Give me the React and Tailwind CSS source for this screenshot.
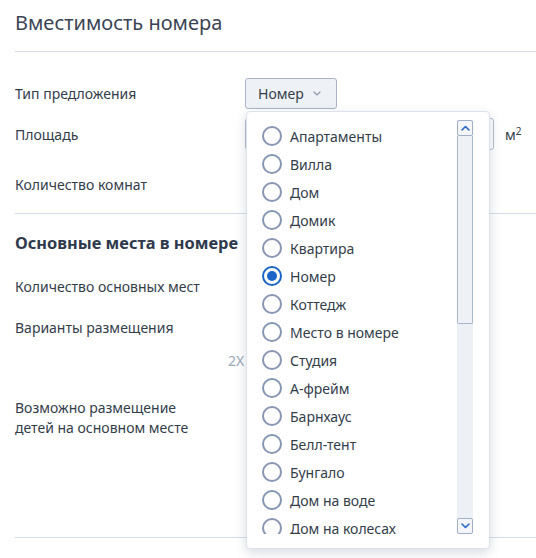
import React from "react";

const types = [
  "Апартаменты",
  "Вилла",
  "Дом",
  "Домик",
  "Квартира",
  "Номер",
  "Коттедж",
  "Место в номере",
  "Студия",
  "А-фрейм",
  "Барнхаус",
  "Белл-тент",
  "Бунгало",
  "Дом на воде",
  "Дом на колесах",
];

function Radio({ checked }) {
  return checked ? (
    <span className="w-[20px] h-[20px] rounded-full border-2 border-[#1b64c8] flex items-center justify-center shrink-0">
      <span className="w-[10px] h-[10px] rounded-full bg-[#1b64c8]" />
    </span>
  ) : (
    <span className="w-[20px] h-[20px] rounded-full border-2 border-[#8797b3] shrink-0" />
  );
}

function ScrollArrow({ up }) {
  return (
    <div className="w-[16px] h-[16px] border border-[#9fb0c8] rounded-[2px] bg-[#f3f5f9] flex items-center justify-center">
      <svg width="9" height="6" viewBox="0 0 9 6" fill="none">
        <path
          d={up ? "M1 5 L4.5 1.5 L8 5" : "M1 1 L4.5 4.5 L8 1"}
          stroke="#2a69cc"
          strokeWidth="1.6"
          strokeLinecap="round"
          strokeLinejoin="round"
        />
      </svg>
    </div>
  );
}

function TypeDropdown({ value }) {
  return (
    <div className="absolute left-[246px] top-[111px] w-[244px] bg-white border border-[#dde3ec] rounded-[4px] shadow-[0_4px_12px_rgba(40,60,90,0.18)] pt-[8px] pb-[14px] pl-[15px] pr-[16px]">
      <div className="flex h-[414px]">
        <div className="flex-1 overflow-hidden pt-[2px]">
          {types.map((t) => (
            <div key={t} className="h-[28px] flex items-center gap-[8px]">
              <Radio checked={t === value} />
              <span className="text-[14px] text-[#333d4a]">{t}</span>
            </div>
          ))}
        </div>
        <div className="w-[16px] bg-[#edf0f5] flex flex-col">
          <ScrollArrow up />
          <div className="h-[188px] border border-t-0 border-[#a9b7ca] rounded-b-[2px] bg-[#eef1f6]" />
          <div className="flex-1" />
          <ScrollArrow />
        </div>
      </div>
    </div>
  );
}

export default function App() {
  return (
    <div
      className="relative w-[536px] h-[558px] overflow-hidden bg-white text-[#333d4a]"
      style={{ fontFamily: '"Noto Sans", "Open Sans", sans-serif' }}
    >
      <div className="pl-[15px]">
        <div className="h-[52px] border-b border-[#d5dce7] pt-[9px]">
          <h1 className="text-[20px] leading-[28px] text-[#3a4454]">Вместимость номера</h1>
        </div>

        <div className="mt-[26px] h-[31px] flex items-center">
          <div className="w-[230px] text-[14px]">Тип предложения</div>
          <button className="h-[31px] w-[92px] pl-[12px] flex items-center gap-[9px] bg-[#eef1f5] border border-[#a9b5c6] rounded-[3px] text-[14px] text-[#333d4a]">
            Номер
            <svg width="8" height="5" viewBox="0 0 8 5" fill="none">
              <path d="M1 1 L4 4 L7 1" stroke="#8c98aa" strokeWidth="1.2" strokeLinecap="round" />
            </svg>
          </button>
        </div>

        <div className="mt-[9px] h-[32px] flex items-center">
          <div className="w-[230px] text-[14px]">Площадь</div>
          <div className="w-[249px] h-[32px] border border-[#b4bfcd] rounded-[3px]" />
          <div className="ml-[11px] text-[14px]">
            м<sup className="text-[10px]">2</sup>
          </div>
        </div>

        <div className="mt-[18px] h-[32px] flex items-center">
          <div className="text-[14px]">Количество комнат</div>
        </div>

        <div className="mt-[13px] border-t border-[#d5dce7]" />

        <h2 className="mt-[17px] text-[16.4px] leading-[24px] font-bold text-[#2e3a4c]">
          Основные места в номере
        </h2>

        <div className="mt-[15px] h-[32px] flex items-center text-[14px]">Количество основных мест</div>

        <div className="mt-[9px] h-[32px] flex items-center text-[14px]">Варианты размещения</div>

        <div className="mt-[8px] h-[20px] pl-[213px] text-[14px] leading-[20px] text-[#9aa8bc]">2X</div>

        <div className="mt-[27px] text-[14px] leading-[20px]">
          Возможно размещение
          <br />
          детей на основном месте
        </div>

        <div className="mt-[99px] border-t border-[#d5dce7]" />
      </div>

      <TypeDropdown value="Номер" />
    </div>
  );
}
